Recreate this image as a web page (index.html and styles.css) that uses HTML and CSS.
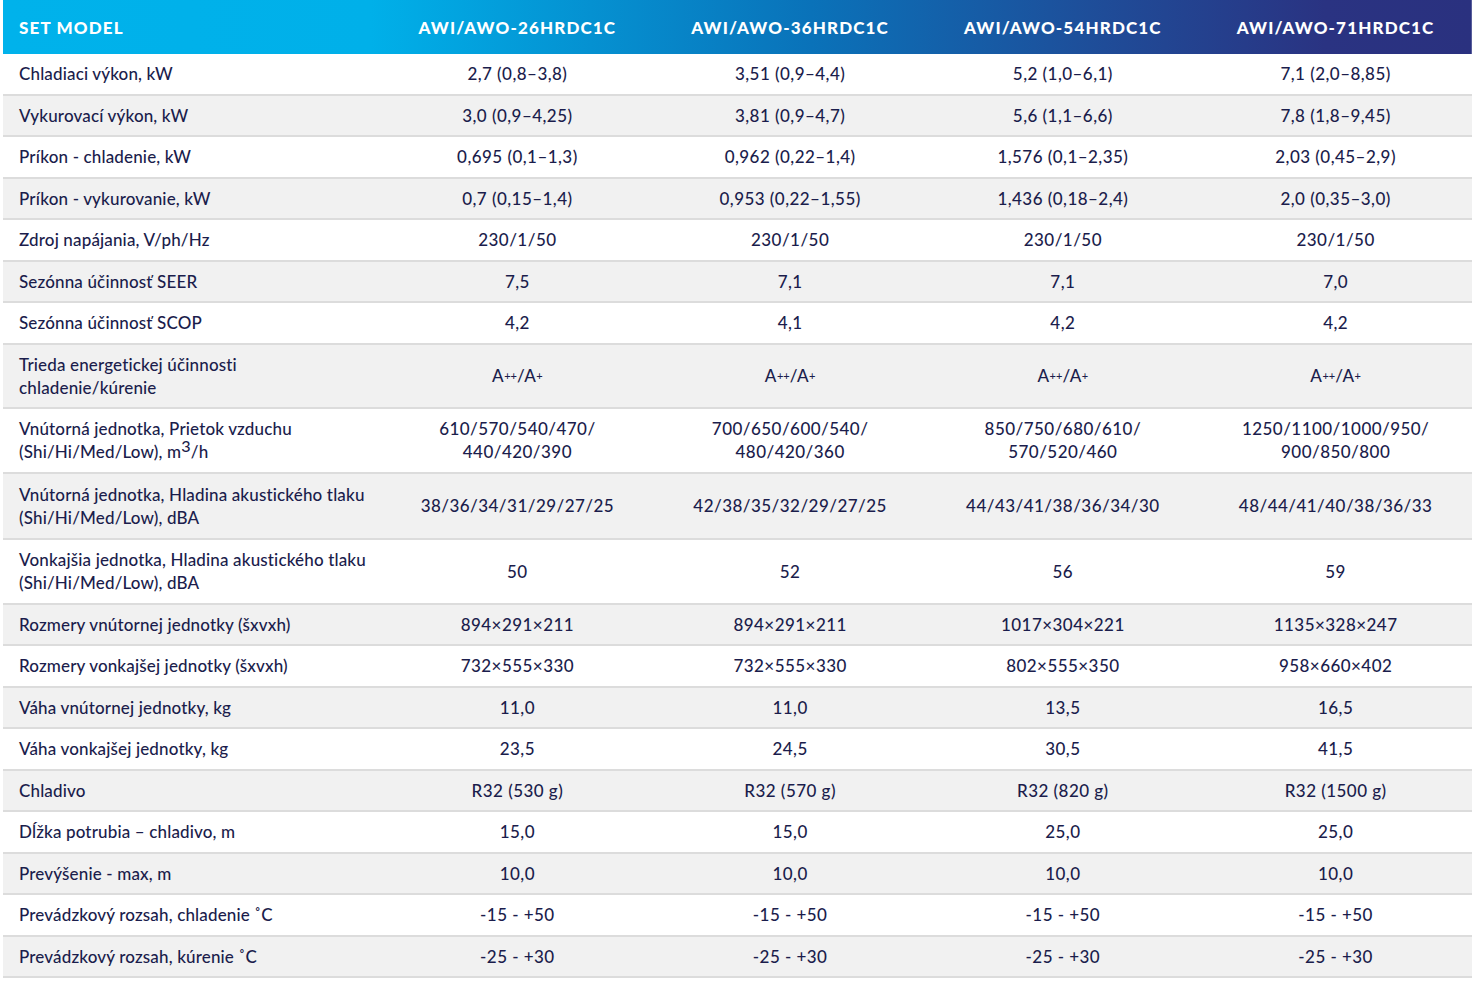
FILE: index.html
```html
<!DOCTYPE html>
<html lang="sk">
<head>
<meta charset="utf-8">
<title>Set model</title>
<link rel="stylesheet" href="styles.css">
</head>
<body>
<table class="spec">
  <colgroup>
    <col class="c-label">
    <col class="c-val"><col class="c-val"><col class="c-val"><col class="c-val">
  </colgroup>
  <thead>
    <tr>
      <th class="lbl">SET MODEL</th>
      <th>AWI/AWO-26HRDC1C</th>
      <th>AWI/AWO-36HRDC1C</th>
      <th>AWI/AWO-54HRDC1C</th>
      <th>AWI/AWO-71HRDC1C</th>
    </tr>
  </thead>
  <tbody>
    <tr><td>Chladiaci výkon, kW</td><td>2,7 (0,8–3,8)</td><td>3,51 (0,9–4,4)</td><td>5,2 (1,0–6,1)</td><td>7,1 (2,0–8,85)</td></tr>
    <tr><td>Vykurovací výkon, kW</td><td>3,0 (0,9–4,25)</td><td>3,81 (0,9–4,7)</td><td>5,6 (1,1–6,6)</td><td>7,8 (1,8–9,45)</td></tr>
    <tr><td>Príkon - chladenie, kW</td><td>0,695 (0,1–1,3)</td><td>0,962 (0,22–1,4)</td><td>1,576 (0,1–2,35)</td><td>2,03 (0,45–2,9)</td></tr>
    <tr><td>Príkon - vykurovanie, kW</td><td>0,7 (0,15–1,4)</td><td>0,953 (0,22–1,55)</td><td>1,436 (0,18–2,4)</td><td>2,0 (0,35–3,0)</td></tr>
    <tr><td>Zdroj napájania, V/ph/Hz</td><td>230/1/50</td><td>230/1/50</td><td>230/1/50</td><td>230/1/50</td></tr>
    <tr><td>Sezónna účinnosť SEER</td><td>7,5</td><td>7,1</td><td>7,1</td><td>7,0</td></tr>
    <tr><td>Sezónna účinnosť SCOP</td><td>4,2</td><td>4,1</td><td>4,2</td><td>4,2</td></tr>
    <tr><td>Trieda energetickej účinnosti<br>chladenie/kúrenie</td><td>A<span class="pl">++</span>/A<span class="pl">+</span></td><td>A<span class="pl">++</span>/A<span class="pl">+</span></td><td>A<span class="pl">++</span>/A<span class="pl">+</span></td><td>A<span class="pl">++</span>/A<span class="pl">+</span></td></tr>
    <tr><td>Vnútorná jednotka, Prietok vzduchu<br>(Shi/Hi/Med/Low), m<sup>3</sup>/h</td><td>610/570/540/470/<br>440/420/390</td><td>700/650/600/540/<br>480/420/360</td><td>850/750/680/610/<br>570/520/460</td><td>1250/1100/1000/950/<br>900/850/800</td></tr>
    <tr class="tall"><td>Vnútorná jednotka, Hladina akustického tlaku<br>(Shi/Hi/Med/Low), dBA</td><td>38/36/34/31/29/27/25</td><td>42/38/35/32/29/27/25</td><td>44/43/41/38/36/34/30</td><td>48/44/41/40/38/36/33</td></tr>
    <tr><td>Vonkajšia jednotka, Hladina akustického tlaku<br>(Shi/Hi/Med/Low), dBA</td><td>50</td><td>52</td><td>56</td><td>59</td></tr>
    <tr><td>Rozmery vnútornej jednotky (šxvxh)</td><td>894×291×211</td><td>894×291×211</td><td>1017×304×221</td><td>1135×328×247</td></tr>
    <tr><td>Rozmery vonkajšej jednotky (šxvxh)</td><td>732×555×330</td><td>732×555×330</td><td>802×555×350</td><td>958×660×402</td></tr>
    <tr><td>Váha vnútornej jednotky, kg</td><td>11,0</td><td>11,0</td><td>13,5</td><td>16,5</td></tr>
    <tr><td>Váha vonkajšej jednotky, kg</td><td>23,5</td><td>24,5</td><td>30,5</td><td>41,5</td></tr>
    <tr><td>Chladivo</td><td>R32 (530 g)</td><td>R32 (570 g)</td><td>R32 (820 g)</td><td>R32 (1500 g)</td></tr>
    <tr><td>Dĺžka potrubia – chladivo, m</td><td>15,0</td><td>15,0</td><td>25,0</td><td>25,0</td></tr>
    <tr><td>Prevýšenie - max, m</td><td>10,0</td><td>10,0</td><td>10,0</td><td>10,0</td></tr>
    <tr><td>Prevádzkový rozsah, chladenie ˚C</td><td>-15 - +50</td><td>-15 - +50</td><td>-15 - +50</td><td>-15 - +50</td></tr>
    <tr><td>Prevádzkový rozsah, kúrenie ˚C</td><td>-25 - +30</td><td>-25 - +30</td><td>-25 - +30</td><td>-25 - +30</td></tr>
  </tbody>
</table>
</body>
</html>
```

FILE: styles.css
```css
html, body {
  margin: 0;
  padding: 0;
  background: #ffffff;
}

body {
  font-family: "Lato", "Noto Sans", "DejaVu Sans", sans-serif;
  color: #1b1d4c;
}

.spec {
  margin-left: 3px;
  width: calc(100% - 3px);
  border-collapse: collapse;
  table-layout: fixed;
}

.c-label { width: 377px; }
.c-val { width: 272px; }

.spec thead tr {
  background: linear-gradient(90deg, #00b2eb 0%, #00b0e9 25%, #0a72b9 55%, #1f4c98 75%, #2a3382 90%, #2a317f 100%);
}

.spec th {
  height: 54px;
  padding: 0 4px;
  color: #ffffff;
  font-weight: 900;
  font-size: 17px;
  letter-spacing: 1.15px;
  text-align: center;
  vertical-align: middle;
}

.spec th.lbl {
  text-align: left;
  padding-left: 16px;
}

.spec td {
  padding: 8px 4px 8.5px;
  line-height: 23px;
  font-size: 17px;
  font-weight: 500;
  letter-spacing: 0.45px;
  text-align: center;
  vertical-align: middle;
  border-bottom: 2px solid #dcdcdc;
}

.spec td:first-child {
  text-align: left;
  padding-left: 16px;
  letter-spacing: 0.15px;
}

.spec tbody tr:nth-child(even) td {
  background: #f1f1f1;
}

.spec tr.tall td {
  padding-top: 9px;
  padding-bottom: 9.5px;
}

.pl {
  font-size: 0.65em;
  vertical-align: 0.2em;
  line-height: 0;
  letter-spacing: 0;
}

sup {
  font-size: 0.95em;
  line-height: 0;
  vertical-align: 0.35em;
}
```
